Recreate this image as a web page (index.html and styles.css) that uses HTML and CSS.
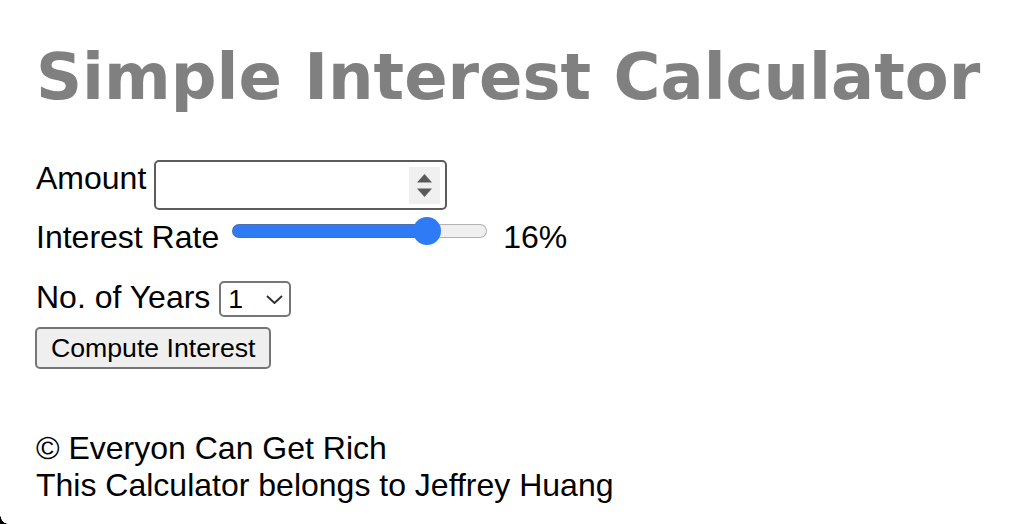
FILE: index.html
```html
<!DOCTYPE html>
<html lang="en">
<head>
<meta charset="utf-8">
<title>Simple Interest Calculator</title>
<link rel="stylesheet" href="styles.css">
</head>
<body>
<div class="page">
  <h1 class="title">Simple Interest Calculator</h1>
  <div class="row row-amount">
    <label class="label" for="amount">Amount</label>
    <div class="number-field">
      <input id="amount" class="number-input" type="text">
      <div class="spinner">
        <svg width="31" height="37" viewBox="0 0 31 37"><polygon points="8,15.5 23,15.5 15.5,7" fill="#5a5a5a"/><polygon points="8,21.5 23,21.5 15.5,30" fill="#5a5a5a"/></svg>
      </div>
    </div>
  </div>
  <div class="row row-rate">
    <label class="label" for="rate">Interest Rate</label>
    <input id="rate" class="rate" type="range" min="0" max="20" value="16">
    <span class="rate-value">16%</span>
  </div>
  <div class="row row-years">
    <label class="label" for="years">No. of Years</label>
    <div class="select-field">
      <select id="years" class="years"><option>1</option><option>2</option><option>3</option><option>4</option><option>5</option></select>
      <svg class="chevron" width="17" height="9" viewBox="0 0 17 9"><polyline points="1,1 8.5,8 16,1" fill="none" stroke="#333" stroke-width="2"/></svg>
    </div>
  </div>
  <button class="compute" type="button">Compute Interest</button>
  <footer class="footer">© Everyon Can Get Rich<br>This Calculator belongs to Jeffrey Huang</footer>
</div>
<div class="corner"></div>
</body>
</html>
```
FILE: styles.css
```css
html, body {
  margin: 0;
  padding: 0;
  background: #fff;
}
body {
  font-family: "Liberation Sans", Arial, sans-serif;
  font-size: 32px;
  color: #000;
}
.page {
  padding: 40px 0 0 36px;
}
.title {
  margin: 0;
  font-family: "DejaVu Sans", Verdana, sans-serif;
  font-weight: bold;
  font-size: 64px;
  line-height: 75px;
  color: #808080;
}
.row {
  display: flex;
  align-items: flex-start;
}
.label {
  line-height: 37px;
}
.row-amount {
  margin-top: 45px;
}
.number-field {
  margin: 0 0 0 8px;
  box-sizing: border-box;
  width: 293px;
  height: 50px;
  border: 2px solid #5c5c5c;
  border-radius: 5px;
  display: flex;
  align-items: center;
}
.number-input {
  flex: 1;
  min-width: 0;
  border: none;
  outline: none;
  background: transparent;
  font: inherit;
  padding: 0 8px;
}
.spinner {
  width: 31px;
  height: 37px;
  margin-right: 5px;
  background: #f0f0f0;
  display: flex;
}
.row-rate {
  margin-top: 9px;
}
.rate {
  -webkit-appearance: none;
  appearance: none;
  margin: 5px 0 0 13px;
  width: 255px;
  height: 14px;
  background: transparent;
  padding: 0;
}
.rate::-webkit-slider-runnable-track {
  box-sizing: border-box;
  height: 14px;
  border-radius: 7px;
  border: 1px solid transparent;
  background:
    linear-gradient(to right, #2f7bf5 0 76%, #efefef 76%) padding-box,
    linear-gradient(to right, #4d6fae 0 76%, #b2b2b2 76%) border-box;
}
.rate::-webkit-slider-thumb {
  -webkit-appearance: none;
  appearance: none;
  width: 28px;
  height: 28px;
  margin-top: -8px;
  border-radius: 50%;
  background: #2f7bf5;
  border: none;
}
.rate-value {
  margin-left: 16px;
  line-height: 37px;
}
.row-years {
  margin-top: 23px;
}
.select-field {
  margin: 2px 0 0 9px;
  box-sizing: border-box;
  width: 72px;
  height: 36px;
  border: 2px solid #767676;
  border-radius: 5px;
  display: flex;
  align-items: center;
}
.years {
  -webkit-appearance: none;
  appearance: none;
  flex: 1;
  min-width: 0;
  height: 100%;
  border: none;
  outline: none;
  background: transparent;
  font-family: "Liberation Sans", Arial, sans-serif;
  font-size: 26.67px;
  color: #000;
  padding: 0 0 0 7px;
}
.chevron {
  margin-right: 6px;
  flex: none;
}
.compute {
  display: block;
  margin: 10px 0 0 -1px;
  box-sizing: border-box;
  height: 42px;
  padding: 0 14px;
  background: #efefef;
  border: 2px solid #767676;
  border-radius: 5px;
  font-family: "Liberation Sans", Arial, sans-serif;
  font-size: 26.67px;
  color: #000;
}
.footer {
  margin-top: 61px;
  line-height: 37px;
}
.corner {
  position: fixed;
  left: 0;
  bottom: 0;
  width: 8px;
  height: 10px;
  background: radial-gradient(ellipse 8px 10px at 8px 0, transparent 95%, #000 100%);
}
```
